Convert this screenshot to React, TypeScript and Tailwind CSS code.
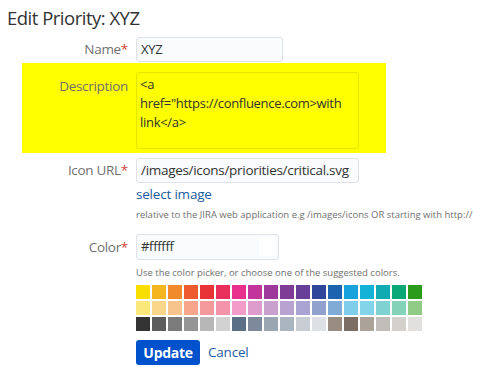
const swatchRows: string[][] = [
  [
    "#f9df00", "#f5b51e", "#f08a2b", "#ef5b30", "#e83437", "#e92f5b",
    "#e9308c", "#c2369b", "#9e3a9c", "#7f3c97", "#673f98", "#2e479a",
    "#1c62af", "#17a2dc", "#13b3d8", "#10aab3", "#0ba877", "#2b9b1c",
  ],
  [
    "#fbe87a", "#fad68b", "#f8c48d", "#f7a58b", "#f59a9c", "#f494aa",
    "#f39cc8", "#de9ccd", "#c9a1cd", "#b8a2cf", "#a9a4d2", "#8fa1cc",
    "#80abd6", "#80cdea", "#82d5e8", "#80d1d1", "#83d3b9", "#90cb86",
  ],
  [
    "#333333", "#5c5c5c", "#7b7b7b", "#959595", "#b7b7b7", "#d2d2d2",
    "#5b6f87", "#7c8a9b", "#9ba6b3", "#abb5c0", "#c8cdd3", "#dde1e5",
    "#998c80", "#7c6e62", "#aba29a", "#c1bdb8", "#d4d0cc", "#e2e0de",
  ],
];

const font = "font-['Segoe_UI','Open_Sans','Noto_Sans',sans-serif]";

function Label({ text, required, className = "" }: { text: string; required?: boolean; className?: string }) {
  return (
    <div className={`shrink-0 pr-2 text-right text-[13.5px] tracking-[-0.3px] text-[#707070] ${className}`}>
      {text}
      {required && <span className="text-[#d04437]">*</span>}
    </div>
  );
}

export default function App() {
  return (
    <div className={`h-[380px] w-[489px] overflow-hidden bg-white text-[#333] ${font}`}>
      <h2 className="pl-[7px] pt-[6px] text-[18.5px] leading-6 tracking-[-0.5px] text-[#333]">Edit Priority: XYZ</h2>

      <div className="mt-[7px] flex items-center">
        <Label text="Name" required className="w-[136px]" />
        <div className="flex h-[25px] w-[147px] items-center rounded-[3px] border border-[#dfe1e6] bg-[#fafbfc] px-1 text-[13px] tracking-[-0.3px]">
          XYZ
        </div>
      </div>

      <div className="ml-[22px] mt-px flex h-[90px] w-[364px] items-start bg-[#ffff00] pt-[9px]">
        <Label text="Description" className="w-[114px] pt-[4px] text-[#6f6f3a]" />
        <div className="h-[77px] w-[223px] rounded-[3px] border border-black/10 px-[3px] pt-[2px] text-[13px] leading-[19px] tracking-[-0.3px] text-[#333]">
          &lt;a
          <br />
          href="https://confluence.com&gt;with
          <br />
          link&lt;/a&gt;
        </div>
      </div>

      <div className="mt-[5px] flex items-center">
        <Label text="Icon URL" required className="w-[136px]" />
        <div className="flex h-[25px] w-[223px] items-center rounded-[3px] border border-[#dfe1e6] bg-[#fafbfc] px-[4px] text-[13.5px] tracking-[-0.3px]">
          /images/icons/priorities/critical.svg
        </div>
      </div>
      <div className="ml-[136px] mt-[2px] text-[13.5px] leading-[19px] tracking-[-0.2px] text-[#1d5c9e]">select image</div>
      <div className="ml-[136px] mt-[4px] whitespace-nowrap text-[9.5px] leading-[14px] text-[#707070]">
        relative to the JIRA web application e.g /images/icons OR starting with http://
      </div>

      <div className="mt-[12px] flex items-center">
        <Label text="Color" required className="w-[136px]" />
        <div className="flex h-[26px] w-[143px] items-center justify-between rounded-[3px] border border-[#dfe1e6] bg-[#fafbfc] pl-[4px] pr-[3px] text-[13px] tracking-[-0.3px]">
          <span>#ffffff</span>
          <span className="h-[18px] w-[16px] bg-white" />
        </div>
      </div>
      <div className="ml-[136px] mt-[6px] whitespace-nowrap text-[9.5px] leading-[14px] text-[#707070]">
        Use the color picker, or choose one of the suggested colors.
      </div>

      <div className="ml-[136px] mt-[5px] flex flex-col gap-[2px]">
        {swatchRows.map((row, i) => (
          <div key={i} className="flex gap-[2px]">
            {row.map((c, j) => (
              <div key={j} className="h-[14px] w-[14px]" style={{ backgroundColor: c }} />
            ))}
          </div>
        ))}
      </div>

      <div className="ml-[136px] mt-[9px] flex items-center gap-2">
        <button className="h-[25px] w-[64px] rounded-[3px] bg-[#0052cc] text-[14px] font-bold tracking-[-0.3px] text-white">
          Update
        </button>
        <span className="text-[13.5px] tracking-[-0.2px] text-[#1d5c9e]">Cancel</span>
      </div>
    </div>
  );
}
